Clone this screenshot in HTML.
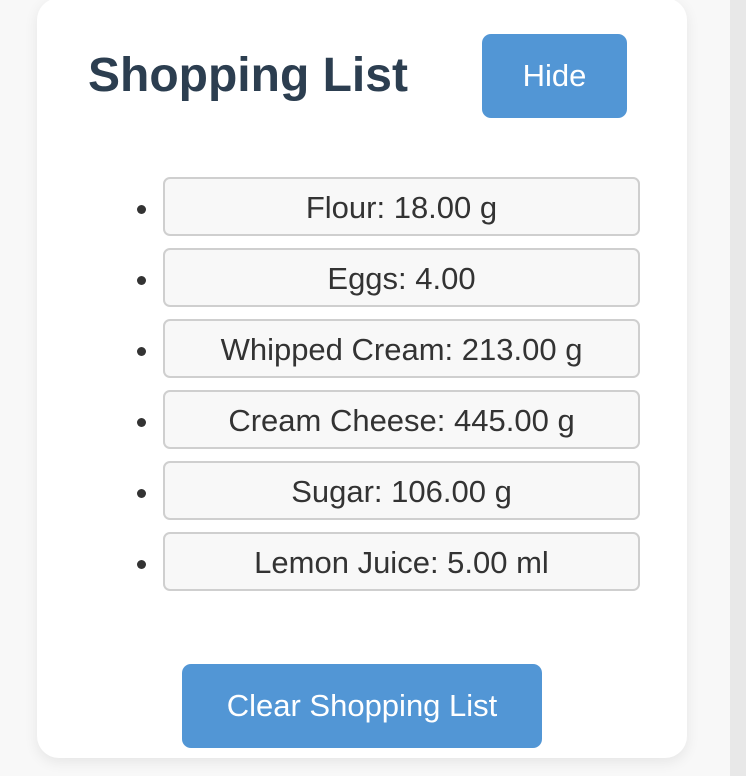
<!DOCTYPE html>
<html><head><style>
html,body{margin:0;padding:0;width:746px;height:776px;overflow:hidden;background:#f8f8f8;font-family:"Liberation Sans",Arial,sans-serif;}
.strip{position:absolute;left:730px;top:0;width:16px;height:776px;background:#e8e8e8;}
.card{position:absolute;left:37px;top:-2px;width:650px;height:760px;background:#fff;border-radius:22px;box-shadow:0 4px 14px rgba(0,0,0,0.08);}
h2{position:absolute;left:51px;top:52px;margin:0;font-size:48px;font-weight:bold;color:#2c3e50;line-height:52px;}
.btn{position:absolute;background:#5296d5;color:#fff;border-radius:9px;display:flex;align-items:center;justify-content:center;}
.hide{left:445px;top:36px;width:145px;height:84px;font-size:31px;}
.clear{left:145px;top:666px;width:360px;height:84px;font-size:31px;}
.item{position:absolute;left:126px;width:473px;height:55px;padding-top:3px;box-sizing:content-box;border:2px solid #cfcfcf;background:#f8f8f8;border-radius:7px;color:#333;font-size:31px;display:flex;align-items:center;justify-content:center;}
.item{height:52px;}
.dot{position:absolute;left:100px;width:9px;height:9px;border-radius:50%;background:#333;}
</style></head><body>
<div class="strip"></div>
<div class="card">
<h2>Shopping List</h2>
<div class="btn hide">Hide</div>
<div class="dot" style="top:207px"></div><div class="item" style="top:179px">Flour: 18.00 g</div>
<div class="dot" style="top:278px"></div><div class="item" style="top:250px">Eggs: 4.00</div>
<div class="dot" style="top:349px"></div><div class="item" style="top:321px">Whipped Cream: 213.00 g</div>
<div class="dot" style="top:420px"></div><div class="item" style="top:392px">Cream Cheese: 445.00 g</div>
<div class="dot" style="top:491px"></div><div class="item" style="top:463px">Sugar: 106.00 g</div>
<div class="dot" style="top:562px"></div><div class="item" style="top:534px">Lemon Juice: 5.00 ml</div>
<div class="btn clear">Clear Shopping List</div>
</div>
</body></html>
